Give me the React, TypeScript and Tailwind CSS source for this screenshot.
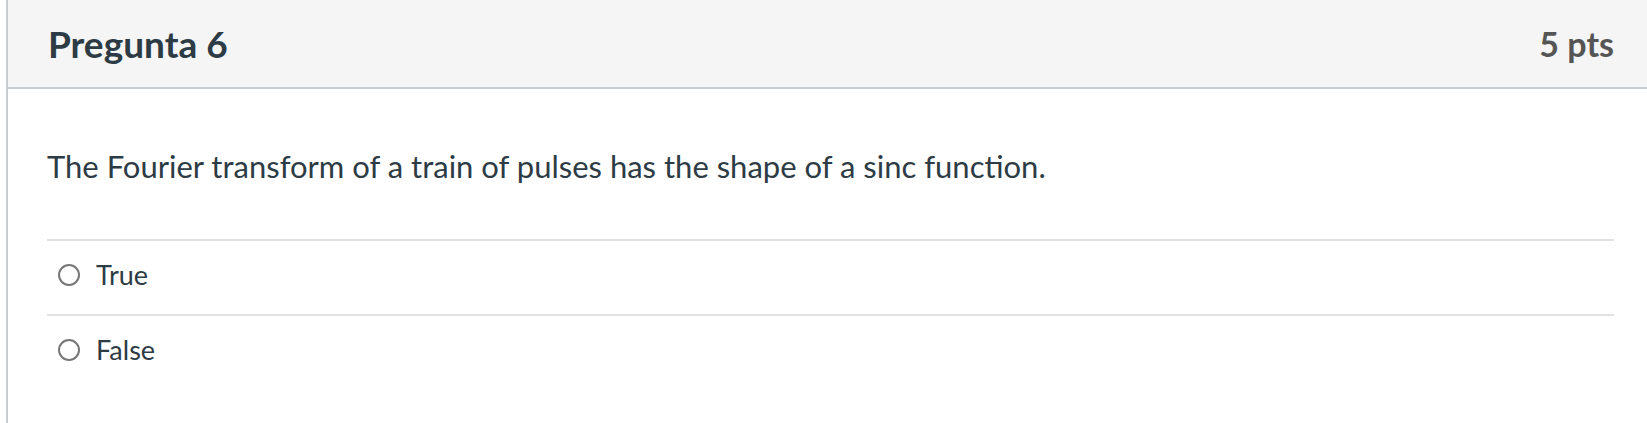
const answers = ["True", "False"];

export default function App() {
  return (
    <div className="h-[423px] w-full bg-white pl-[6px] font-['Lato','Noto_Sans',sans-serif] text-[#2d3b45]">
      <div className="h-full border-l-2 border-[#c7cdd1]">
        <div className="flex h-[89px] items-center justify-between border-b-2 border-[#c7cdd1] bg-[#f5f5f5] pl-[40px] pr-[33px]">
          <h2 className="text-[37px] font-bold leading-none">Pregunta 6</h2>
          <span className="text-[34px] font-bold leading-none text-[#555555]">5 pts</span>
        </div>

        <div className="pl-[39px] pr-[33px] pt-[57px]">
          <p className="text-[31px] leading-[40px]">
            The Fourier transform of a train of pulses has the shape of a sinc function.
          </p>

          <div className="mt-[53px]">
            {answers.map((a) => (
              <label
                key={a}
                className="flex h-[75px] items-center border-t-2 border-[#e2e2e2] pl-[11px]"
              >
                <span className="mb-[6px] h-[22px] w-[22px] shrink-0 rounded-full border-2 border-[#777777] bg-white" />
                <span className="mb-[7px] ml-[16px] text-[27px] leading-none">{a}</span>
              </label>
            ))}
          </div>
        </div>
      </div>
    </div>
  );
}
